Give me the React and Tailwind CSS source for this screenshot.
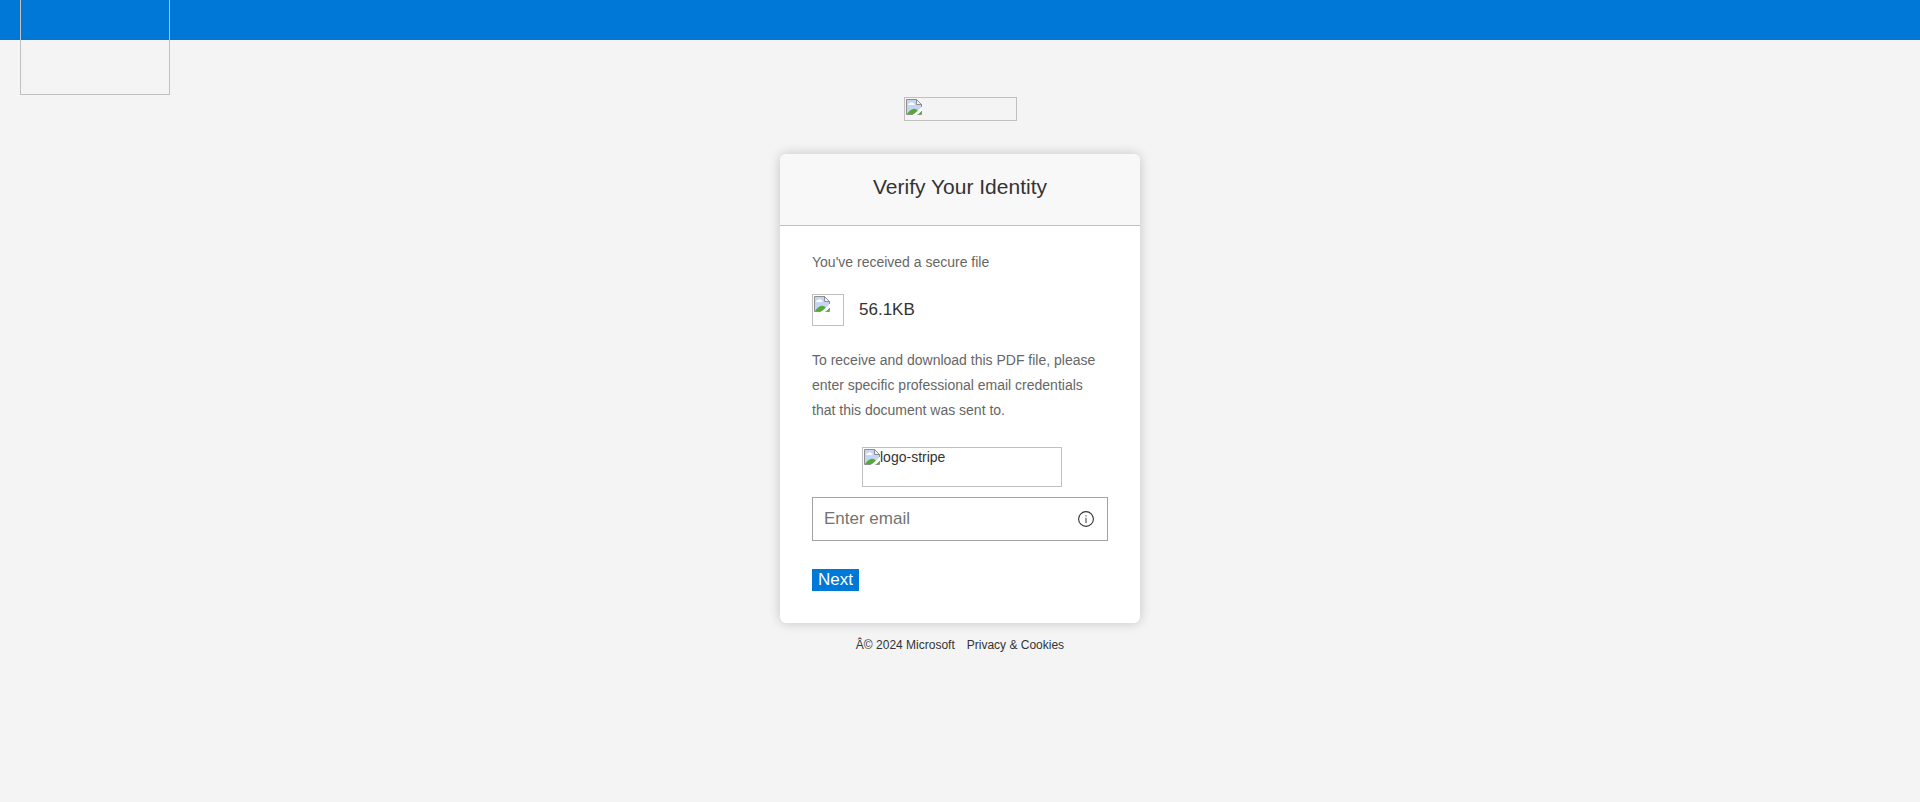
function BrokenImage() {
  return (
    <svg width="16" height="16" viewBox="0 0 16 16" className="block shrink-0">
      <path d="M1 1H10.500L15 5V9L9 15H1Z" fill="#c5d6f5" />
      <path d="M2.200 6C1.800 4.700 3 4 4 4.200C4.800 2.700 6.800 2.900 7.200 4.200C8.500 4.200 8.800 5.400 8.200 6Z" fill="#fff" />
      <path d="M1 15C3 12 5.500 9.700 8 9.700C9.500 9.700 11 10.500 12 12L8 15.200Z" fill="#53aa36" />
      <path d="M12 15.200L15 12.500V15.200Z" fill="#53aa36" />
      <path d="M7 16L16 8V11.500L11.200 16Z" fill="#fff" />
      <path d="M10.500 .5L15.500 5.500H10.500Z" fill="#f2f2f2" stroke="#8f8f8f" />
      <path d="M11 .5H.5V15.500H7M15.500 5V8M11.500 15.500H15.500V12" fill="none" stroke="#8f8f8f" />
    </svg>
  );
}

function InfoIcon() {
  return (
    <svg width="16" height="16" viewBox="0 0 16 16" className="block">
      <circle cx="8" cy="8" r="7.400" fill="none" stroke="#333" strokeWidth="1.100" />
      <path d="M8 6.800V12" stroke="#333" />
      <path d="M8 4.300V5.500" stroke="#333" />
    </svg>
  );
}

export default function App() {
  return (
    <div className="min-h-screen bg-[#f4f4f4] font-['Liberation_Sans',sans-serif] text-[#333]">
      <header className="relative h-10 bg-[#0078d7]">
        <div className="absolute top-0 left-5 h-[95px] w-[150px] border border-t-0 border-[#c0c0c0]" />
      </header>
      <main className="flex flex-col items-center pt-[57px]">
        <div className="h-6 w-[113px] border border-[#c0c0c0] p-px">
          <BrokenImage />
        </div>
        <section className="mt-[33px] h-[469px] w-[360px] overflow-hidden rounded-[6px] bg-white shadow-[0_0_12px_rgba(0,0,0,0.2)]">
          <div className="h-[72px] border-b border-[#c0c0c0] bg-[#f8f8f8] pt-[18px] text-center">
            <h1 className="text-[21px] leading-[30px]">Verify Your Identity</h1>
          </div>
          <div className="px-8 pt-6">
            <p className="text-[14px] leading-[25px] text-[#666]">You've received a secure file</p>
            <div className="mt-[19px] flex h-8 items-center gap-[15px]">
              <div className="h-8 w-8 border border-[#c0c0c0] p-px">
                <BrokenImage />
              </div>
              <span className="text-[17px] leading-6">56.1KB</span>
            </div>
            <p className="mt-[22px] text-[14px] leading-[25px] text-[#666]">
              To receive and download this PDF file, please
              <br />
              enter specific professional email credentials
              <br />
              that this document was sent to.
            </p>
            <div className="mt-6 ml-[50px] flex h-10 w-[200px] border border-[#c0c0c0] p-px text-[14px] leading-4">
              <BrokenImage />
              <span>logo-stripe</span>
            </div>
            <div className="mt-[10px] flex h-11 w-[296px] items-center border border-[#a3a3a3] pr-[13px] pl-[11px]">
              <input
                className="min-w-0 flex-1 text-[17px] leading-6 outline-none placeholder:text-[#737373]"
                placeholder="Enter email"
              />
              <InfoIcon />
            </div>
            <button className="mt-7 block h-[22px] w-[47px] bg-[#0078d7] text-[17px] leading-[22px] text-white">Next</button>
          </div>
        </section>
        <footer className="mt-[14px] flex gap-3 text-[12px] leading-4">
          <span>Â© 2024 Microsoft</span>
          <span>Privacy &amp; Cookies</span>
        </footer>
      </main>
    </div>
  );
}
